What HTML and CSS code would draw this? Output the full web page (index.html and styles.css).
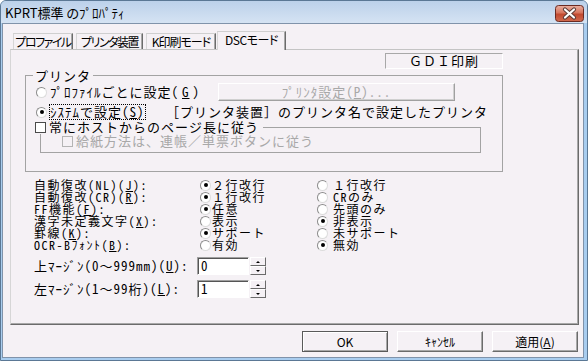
FILE: index.html
```html
<!DOCTYPE html>
<html lang="ja">
<head>
  <meta charset="UTF-8">
  <meta name="viewport" content="width=device-width, initial-scale=1.0">
  <title>KPRT標準 のﾌﾟﾛﾊﾟﾃｨ</title>
  <link rel="stylesheet" href="styles.css">
</head>
<body>
  <div class="window">
    <div class="titlebar">
      <span class="title">KPRT標準 のﾌﾟﾛﾊﾟﾃｨ</span>
      <button class="close-btn" aria-label="閉じる">
        <svg width="29" height="17" viewBox="0 0 29 17">
          <defs>
            <linearGradient id="closeGrad" x1="0" y1="0" x2="0" y2="1">
              <stop offset="0" stop-color="#eab1a3"/>
              <stop offset="0.45" stop-color="#d7765f"/>
              <stop offset="0.55" stop-color="#c24a30"/>
              <stop offset="1" stop-color="#d06a4f"/>
            </linearGradient>
          </defs>
          <rect x="0.5" y="0.5" width="28" height="16" rx="3" fill="url(#closeGrad)" stroke="#6b2a22"/>
          <path d="M10 4.5 L19 12.5 M19 4.5 L10 12.5" stroke="#5b3b37" stroke-width="4.2" stroke-linecap="round"/>
          <path d="M10 4.5 L19 12.5 M19 4.5 L10 12.5" stroke="#ffffff" stroke-width="2.2" stroke-linecap="round"/>
        </svg>
      </button>
    </div>

    <div class="client">
      <div class="tabs">
        <div class="tab tab-profile">プロファイル</div>
        <div class="tab tab-device">プリンタ装置</div>
        <div class="tab tab-kmode">K印刷モード</div>
        <div class="tab tab-dsc selected">DSCモード</div>
      </div>

      <div class="panel">
        <div class="printer-area">
          <div class="mode-box">ＧＤＩ印刷</div>

          <fieldset class="group">
            <legend>プリンタ</legend>
            <div class="row row-profile">
              <label class="choice"><span class="radio"></span>ﾌﾟﾛﾌｧｲﾙごとに設定(<u>G</u>)</label>
              <button class="btn printer-btn" disabled>ﾌﾟﾘﾝﾀ設定(<u>P</u>)...</button>
            </div>
            <div class="row row-system">
              <label class="choice"><span class="radio checked"></span><span class="focus">ｼｽﾃﾑで設定(<u>S</u>)</span></label>
              <span class="note">［プリンタ装置］のプリンタ名で設定したプリンタ</span>
            </div>
            <fieldset class="subgroup">
              <legend><label class="choice"><span class="check"></span>常にホストからのページ長に従う</label></legend>
              <div class="row row-paper">
                <label class="choice disabled"><span class="check"></span>給紙方法は、連帳／単票ボタンに従う</label>
              </div>
            </fieldset>
          </fieldset>
        </div>

        <div class="options">
          <span class="label">自動復改(NL)(<u>J</u>):</span>
          <label class="choice col1"><span class="radio checked"></span>２行改行</label>
          <label class="choice col2"><span class="radio"></span>１行改行</label>

          <span class="label">自動復改(CR)(<u>R</u>):</span>
          <label class="choice col1"><span class="radio checked"></span>１行改行</label>
          <label class="choice col2"><span class="radio"></span>CRのみ</label>

          <span class="label">FF機能(<u>F</u>):</span>
          <label class="choice col1"><span class="radio checked"></span>任意</label>
          <label class="choice col2"><span class="radio"></span>先頭のみ</label>

          <span class="label">漢字未定義文字(<u>X</u>):</span>
          <label class="choice col1"><span class="radio"></span>表示</label>
          <label class="choice col2"><span class="radio checked"></span>非表示</label>

          <span class="label">罫線(<u>K</u>):</span>
          <label class="choice col1"><span class="radio checked"></span>サポート</label>
          <label class="choice col2"><span class="radio"></span>未サポート</label>

          <span class="label">OCR-Bﾌｫﾝﾄ(<u>B</u>):</span>
          <label class="choice col1"><span class="radio"></span>有効</label>
          <label class="choice col2"><span class="radio checked"></span>無効</label>
        </div>

        <div class="margins">
          <div class="margin-row">
            <span class="label">上ﾏｰｼﾞﾝ(0～999mm)(<u>U</u>):</span>
            <span class="field">0</span>
            <span class="spinner"><span class="spin up"></span><span class="spin down"></span></span>
          </div>
          <div class="margin-row">
            <span class="label">左ﾏｰｼﾞﾝ(1～99桁)(<u>L</u>):</span>
            <span class="field">1</span>
            <span class="spinner"><span class="spin up"></span><span class="spin down"></span></span>
          </div>
        </div>
      </div>

      <div class="buttons">
        <button class="btn dlg-btn default">OK</button>
        <button class="btn dlg-btn">ｷｬﾝｾﾙ</button>
        <button class="btn dlg-btn">適用(<u>A</u>)</button>
      </div>
    </div>
  </div>
</body>
</html>
```

FILE: styles.css
```css
/* General Styles */
* {
  box-sizing: border-box;
}

body {
  margin: 0;
  font-family: "Noto Sans CJK JP", sans-serif;
  color: #000;
  background-color: #fff;
}

/* Window frame */
.window {
  width: 588px;
  height: 361px;
  display: flex;
  flex-direction: column;
  padding: 0 3px 2px 1px;
  background-color: #a9cdef;
  border: 1px solid #5b7895;
  border-radius: 6px 6px 0 0;
}

.titlebar {
  height: 22px;
  margin: 0 -3px 0 -1px;
  padding: 1px 3px 0 4px;
  display: flex;
  align-items: center;
  justify-content: space-between;
  background: linear-gradient(#bcd1ea, #d5e3f3);
  border-radius: 5px 5px 0 0;
}

.title {
  font-size: 13px;
  line-height: 16px;
  font-feature-settings: "palt";
}

.close-btn {
  width: 29px;
  height: 17px;
  margin-top: 2px;
  padding: 0;
  border: none;
  background: none;
  display: block;
}

.close-btn svg {
  display: block;
}

.client {
  flex: 1;
  display: flex;
  flex-direction: column;
  padding: 7px 4px 4px 7px;
  background-color: #f5f1f5;
  border: 1px solid #8093aa;
}

/* Tabs */
.tabs {
  height: 18px;
  display: flex;
  align-items: flex-end;
  gap: 3px;
  padding-left: 3px;
}

.tab {
  height: 16px;
  display: flex;
  align-items: center;
  justify-content: center;
  white-space: nowrap;
  font-size: 12px;
  letter-spacing: -1.5px;
  font-feature-settings: "palt";
  line-height: 14px;
  background-color: #f5f1f5;
  border: 1px solid;
  border-bottom: none;
  border-color: #cfcfcf #6b6b6b #6b6b6b #d6d6d6;
  box-shadow: inset -1px 0 #a8a8a8;
}

.tab-profile { width: 60px; }
.tab-device { width: 67px; }
.tab-kmode { width: 70px; letter-spacing: -1px; }
.tab-dsc { width: 69px; letter-spacing: -0.5px; }

.tab.selected {
  height: 19px;
  margin: 0 0 -1px -2px;
  padding-bottom: 2px;
  position: relative;
  z-index: 1;
}

/* Tab page */
.panel {
  height: 276px;
  font-family: "Noto Sans Mono CJK JP", "Noto Sans CJK JP", monospace;
  font-size: 13px;
  line-height: 14px;
  letter-spacing: 1px;
  border: 1px solid;
  border-color: #c4c4c4 #6b6b6b #6b6b6b #d6d6d6;
  box-shadow: inset -1px -1px #a8a8a8;
}

.printer-area {
  width: 478px;
  margin: 3px 0 0 14px;
}

.mode-box {
  width: 118px;
  height: 16px;
  margin-left: auto;
  text-align: center;
  line-height: 14px;
  border: 1px solid;
  border-color: #a8a8a8 #fff #fff #a8a8a8;
}

.group {
  margin: 0;
  padding: 0 10px 18px 10px;
  border: 1px solid #a3a3a3;
}

.group > legend {
  margin-left: -3px;
  padding: 0 2px;
  line-height: 13px;
}

.row {
  display: flex;
  align-items: center;
}

.row-profile {
  height: 18px;
  margin-top: 1px;
}

.row-profile .choice {
  width: 182px;
}

.row-system {
  height: 14px;
  margin-top: 4px;
}

.row-system .choice {
  width: 130px;
}

.focus {
  outline: 1px dotted #000;
  outline-offset: 0;
}

.subgroup {
  margin: 1px 11px 0 4px;
  padding: 0 0 4px 0;
  border: 1px solid #a3a3a3;
}

.subgroup > legend {
  margin-left: -6px;
  padding: 0 4px 0 0;
  background-color: #f5f1f5;
}

.row-paper {
  height: 14px;
  padding-left: 21px;
}

/* Radio buttons and check boxes */
.choice {
  display: flex;
  align-items: center;
  gap: 3px;
  white-space: nowrap;
}

.radio {
  width: 11px;
  height: 11px;
  flex: none;
  border-radius: 50%;
  background-color: #fff;
  border: 1px solid;
  border-color: #8c8c8c #dcdcdc #dcdcdc #8c8c8c;
  display: flex;
  align-items: center;
  justify-content: center;
}

.radio.checked::after {
  content: "";
  width: 4px;
  height: 4px;
  border-radius: 50%;
  background-color: #000;
}

.check {
  width: 11px;
  height: 11px;
  flex: none;
  background-color: #fff;
  border: 1px solid #4a4a4a;
}

.choice.disabled {
  color: #a8a8a8;
}

.choice.disabled .check {
  border-color: #b4b4b4;
  background-color: #f5f1f5;
}

/* Buttons */
.btn {
  font-family: "Noto Sans CJK JP", sans-serif;
  font-size: 12px;
  color: #000;
  padding: 0;
  background-color: #f5f1f5;
  border: 1px solid;
  border-color: #fff #6b6b6b #6b6b6b #fff;
  box-shadow: inset -1px -1px #a8a8a8;
}

.printer-btn {
  width: 237px;
  height: 18px;
  font-family: "Noto Sans Mono CJK JP", "Noto Sans CJK JP", monospace;
  font-size: 13px;
  letter-spacing: 1px;
  line-height: 14px;
  color: #a8a8a8;
  border-color: #fff #a0a0a0 #a0a0a0 #fff;
  box-shadow: inset -1px -1px #d0d0d0;
}

/* Option grid */
.options {
  display: grid;
  grid-template-columns: 166px 117px auto;
  grid-auto-rows: 12px;
  margin: 7px 0 0 23px;
  font-size: 12px;
  line-height: 12px;
  letter-spacing: 1.5px;
}

.options .choice.col1 {
  gap: 1px;
}

.options .choice.col2 {
  gap: 5px;
}

/* Margin inputs */
.margins {
  display: flex;
  flex-direction: column;
  gap: 5px;
  margin: 6px 0 0 23px;
}

.margin-row {
  height: 18px;
  display: flex;
  align-items: center;
}

.margin-row .label {
  width: 163px;
}

.field {
  width: 52px;
  height: 18px;
  padding-left: 3px;
  line-height: 15px;
  background-color: #fff;
  border: 1px solid;
  border-color: #a0a0a0 #fff #fff #a0a0a0;
  box-shadow: inset 1px 1px #555;
}

.spinner {
  width: 16px;
  height: 18px;
  margin-left: 1px;
  display: flex;
  flex-direction: column;
}

.spin {
  height: 9px;
  display: flex;
  align-items: center;
  justify-content: center;
  background-color: #f5f1f5;
  border: 1px solid;
  border-color: #fff #6b6b6b #6b6b6b #fff;
}

.spin::after {
  content: "";
  border-left: 2px solid transparent;
  border-right: 2px solid transparent;
}

.spin.up::after {
  border-bottom: 2px solid #000;
}

.spin.down::after {
  border-top: 2px solid #000;
}

/* Dialog buttons */
.buttons {
  display: flex;
  justify-content: flex-end;
  gap: 9px;
  margin: 6px 1px 0 0;
}

.dlg-btn {
  width: 86px;
  height: 21px;
}

.dlg-btn.default {
  border-color: #5a5a5a;
  box-shadow: inset 1px 1px #fff, inset -1px -1px #a8a8a8;
}
```
